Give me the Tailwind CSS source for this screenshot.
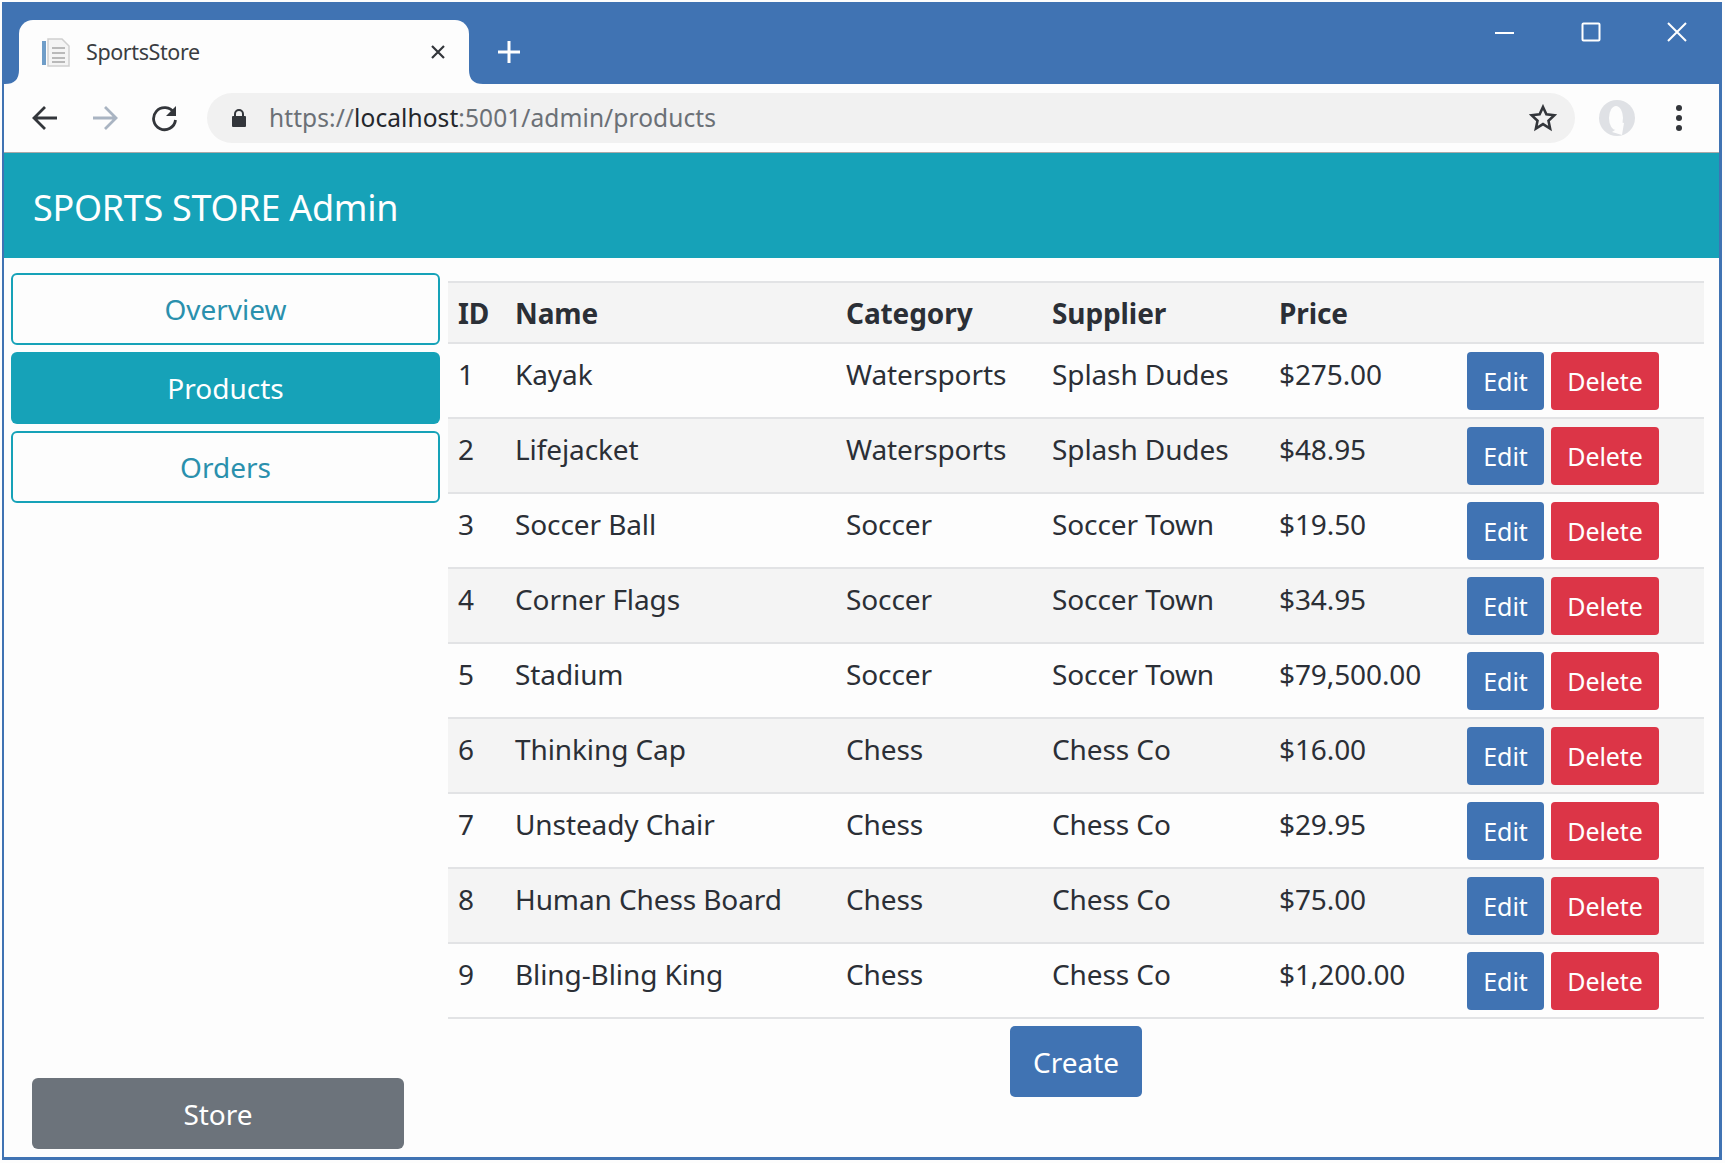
<!doctype html>
<html><head><meta charset="utf-8"><title>SportsStore</title>
<script src="https://cdn.jsdelivr.net/npm/@tailwindcss/browser@4"></script></head>
<body class="m-0 bg-[#fdfdfd]">
<div class="w-[1725px] h-[1163px] overflow-hidden bg-[#fdfdfd] pt-[2px] pb-[3px] pl-[2px] font-['Noto_Sans',sans-serif] text-[#2b2f36]">
<div class="w-[1720px] h-[1158px] border-l-[2px] border-r-[3px] border-b-[3px] border-[#4073b3] flex flex-col overflow-hidden relative">
  <!-- title bar -->
  <div class="h-[82px] shrink-0 bg-[#4073b3] relative flex items-end pl-[15px]">
    <div class="w-[450px] h-[64px] bg-[#fdfdfd] rounded-t-[14px] flex items-center pl-[21px] pr-[22px] relative">
      <svg width="14" height="14" viewBox="0 0 14 14" class="absolute left-[-14px] bottom-0"><path d="M14 0Q14 14 0 14H14Z" fill="#fdfdfd"/></svg>
      <svg width="14" height="14" viewBox="0 0 14 14" class="absolute right-[-14px] bottom-0"><path d="M0 0Q0 14 14 14H0Z" fill="#fdfdfd"/></svg>
      <svg width="32" height="32" viewBox="0 0 32 32" class="mr-[14px]"><rect x="2" y="5" width="4" height="24" fill="#6f9dc8"/><path d="M8 3h14l7 7v20H8z" fill="#f4f4f4" stroke="#cfcfcf" stroke-width="1.5"/><path d="M12 12h13M12 17h13M12 22h13M12 26h13" stroke="#b9b9b9" stroke-width="2"/></svg>
      <span class="text-[21.5px] tracking-[-0.4px] text-[#3a3d42]">SportsStore</span>
      <svg width="16" height="16" viewBox="0 0 16 16" class="ml-auto mr-[1px]"><path d="M2 2l12 12M14 2L2 14" stroke="#33363b" stroke-width="2.2"/></svg>
    </div>
    <svg width="22" height="22" viewBox="0 0 22 22" class="ml-[29px] mb-[21px]"><path d="M11 0v22M0 11h22" stroke="#fff" stroke-width="3"/></svg>
    <div class="absolute right-[32px] top-[20px] flex items-center gap-[66px]">
      <svg width="20" height="20" viewBox="0 0 20 20"><path d="M0 11h19" stroke="#fff" stroke-width="2"/></svg>
      <svg width="20" height="20" viewBox="0 0 20 20"><rect x="1.5" y="1.5" width="17" height="17" rx="1" fill="none" stroke="#fff" stroke-width="2"/></svg>
      <svg width="20" height="20" viewBox="0 0 20 20"><path d="M1 1l18 18M19 1L1 19" stroke="#fff" stroke-width="2"/></svg>
    </div>
  </div>
  <!-- toolbar -->
  <div class="h-[69px] shrink-0 bg-[#fdfdfd] border-b-[1px] border-[#a9a9a9] flex items-center pl-[28px]">
    <svg width="26" height="26" viewBox="0 0 26 26"><path d="M25 13H3M13 2L2 13l11 11" fill="none" stroke="#33363b" stroke-width="2.8"/></svg>
    <svg width="26" height="26" viewBox="0 0 26 26" class="ml-[34px]"><path d="M1 13h22M13 2l11 11-11 11" fill="none" stroke="#a9b4c2" stroke-width="2.8"/></svg>
    <svg width="28" height="28" viewBox="0 0 28 28" class="ml-[33px]"><path d="M23 9a11 11 0 1 0 1.5 7" fill="none" stroke="#33363b" stroke-width="2.8"/><path d="M25 2v10H15z" fill="#33363b"/></svg>
    <div class="ml-[28px] w-[1368px] h-[50px] rounded-full bg-[#f1f1f1] flex items-center pl-[24px] pr-[18px]">
      <svg width="16" height="20" viewBox="0 0 16 20"><path d="M4 9V6a4 4 0 0 1 8 0v3" fill="none" stroke="#33363b" stroke-width="2"/><rect x="1" y="8" width="14" height="11" rx="1" fill="#33363b"/></svg>
      <span class="ml-[22px] text-[24.5px] tracking-[0.08px] text-[#6b7076]">https://<span class="text-[#24272c]">localhost</span>:5001/admin/products</span>
      <svg width="28" height="28" viewBox="0 0 24 24" class="ml-auto"><path d="M12 2.5l2.9 6.3 6.9.8-5.1 4.7 1.4 6.8L12 17.2l-6.1 3.9 1.4-6.8L2.2 9.6l6.9-.8z" fill="none" stroke="#33363b" stroke-width="2.2"/></svg>
    </div>
    <svg width="38" height="36" viewBox="0 0 38 36" class="ml-[23px]"><circle cx="19" cy="18" r="18" fill="#dfe1e5"/><ellipse cx="18" cy="18" rx="7" ry="12" fill="#fdfdfd"/><path d="M14 32q6-3 8-10l4 1-2 12z" fill="#fdfdfd"/></svg>
    <svg width="8" height="28" viewBox="0 0 8 28" class="ml-[39px]"><circle cx="4" cy="4" r="3" fill="#33363b"/><circle cx="4" cy="14" r="3" fill="#33363b"/><circle cx="4" cy="24" r="3" fill="#33363b"/></svg>
  </div>
  <!-- header -->
  <div class="h-[105px] shrink-0 bg-[#16a2b8] flex items-center pl-[29px] pt-[4px] text-[36px] tracking-[-0.3px] text-white">SPORTS STORE Admin</div>
  <!-- body -->
  <div class="flex-1 flex min-h-0">
    <aside class="w-[444px] shrink-0 pl-[7px] pt-[15px] pb-[8px] flex flex-col text-[28px]">
      <a class="w-[429px] h-[72px] border-[2px] border-[#16a2b8] rounded-[6px] text-[#2a90ad] flex items-center justify-center">Overview</a>
      <a class="w-[429px] h-[72px] mt-[7px] bg-[#16a2b8] rounded-[6px] text-white flex items-center justify-center">Products</a>
      <a class="w-[429px] h-[72px] mt-[7px] border-[2px] border-[#16a2b8] rounded-[6px] text-[#2a90ad] flex items-center justify-center">Orders</a>
      <a class="mt-auto ml-[21px] w-[372px] h-[71px] bg-[#6c737b] rounded-[6px] text-white flex items-center justify-center">Store</a>
    </aside>
    <main class="w-[1256px] shrink-0 pt-[23px]">
      <table class="w-full table-fixed border-collapse text-[28px] tracking-[-0.1px]">
        <colgroup><col class="w-[57px]"><col class="w-[331px]"><col class="w-[206px]"><col class="w-[227px]"><col class="w-[187px]"><col></colgroup>
        <thead class="bg-[#f4f4f4] font-bold text-left">
          <tr class="h-[61px] border-y-[2px] border-[#e2e3e5] [&_th]:pl-[10px]"><th>ID</th><th>Name</th><th>Category</th><th>Supplier</th><th>Price</th><th></th></tr>
        </thead>
        <tbody class="[&_td]:pl-[10px] [&_td]:align-top [&_td]:pt-[9px] [&_tr]:h-[75px] [&_tr]:border-b-[2px] [&_tr]:border-[#e2e3e5] [&_tr:nth-child(even)]:bg-[#f4f4f4] [&_button]:h-[58px] [&_button]:pt-[2px] [&_button]:rounded-[4px] [&_button]:text-white [&_button]:text-[25px]">
          <tr><td>1</td><td>Kayak</td><td>Watersports</td><td>Splash Dudes</td><td>$275.00</td><td><div class="flex gap-[7px] -mt-[1px] ml-[1px]"><button class="w-[77px] bg-[#4073b3]">Edit</button><button class="w-[108px] bg-[#dc3547]">Delete</button></div></td></tr>
          <tr><td>2</td><td>Lifejacket</td><td>Watersports</td><td>Splash Dudes</td><td>$48.95</td><td><div class="flex gap-[7px] -mt-[1px] ml-[1px]"><button class="w-[77px] bg-[#4073b3]">Edit</button><button class="w-[108px] bg-[#dc3547]">Delete</button></div></td></tr>
          <tr><td>3</td><td>Soccer Ball</td><td>Soccer</td><td>Soccer Town</td><td>$19.50</td><td><div class="flex gap-[7px] -mt-[1px] ml-[1px]"><button class="w-[77px] bg-[#4073b3]">Edit</button><button class="w-[108px] bg-[#dc3547]">Delete</button></div></td></tr>
          <tr><td>4</td><td>Corner Flags</td><td>Soccer</td><td>Soccer Town</td><td>$34.95</td><td><div class="flex gap-[7px] -mt-[1px] ml-[1px]"><button class="w-[77px] bg-[#4073b3]">Edit</button><button class="w-[108px] bg-[#dc3547]">Delete</button></div></td></tr>
          <tr><td>5</td><td>Stadium</td><td>Soccer</td><td>Soccer Town</td><td>$79,500.00</td><td><div class="flex gap-[7px] -mt-[1px] ml-[1px]"><button class="w-[77px] bg-[#4073b3]">Edit</button><button class="w-[108px] bg-[#dc3547]">Delete</button></div></td></tr>
          <tr><td>6</td><td>Thinking Cap</td><td>Chess</td><td>Chess Co</td><td>$16.00</td><td><div class="flex gap-[7px] -mt-[1px] ml-[1px]"><button class="w-[77px] bg-[#4073b3]">Edit</button><button class="w-[108px] bg-[#dc3547]">Delete</button></div></td></tr>
          <tr><td>7</td><td>Unsteady Chair</td><td>Chess</td><td>Chess Co</td><td>$29.95</td><td><div class="flex gap-[7px] -mt-[1px] ml-[1px]"><button class="w-[77px] bg-[#4073b3]">Edit</button><button class="w-[108px] bg-[#dc3547]">Delete</button></div></td></tr>
          <tr><td>8</td><td>Human Chess Board</td><td>Chess</td><td>Chess Co</td><td>$75.00</td><td><div class="flex gap-[7px] -mt-[1px] ml-[1px]"><button class="w-[77px] bg-[#4073b3]">Edit</button><button class="w-[108px] bg-[#dc3547]">Delete</button></div></td></tr>
          <tr><td>9</td><td>Bling-Bling King</td><td>Chess</td><td>Chess Co</td><td>$1,200.00</td><td><div class="flex gap-[7px] -mt-[1px] ml-[1px]"><button class="w-[77px] bg-[#4073b3]">Edit</button><button class="w-[108px] bg-[#dc3547]">Delete</button></div></td></tr>
        </tbody>
      </table>
      <div class="flex justify-center mt-[7px]"><button class="w-[132px] h-[71px] bg-[#4073b3] rounded-[5px] text-white text-[28px]">Create</button></div>
    </main>
  </div>
</div>
</div>
</body></html>
